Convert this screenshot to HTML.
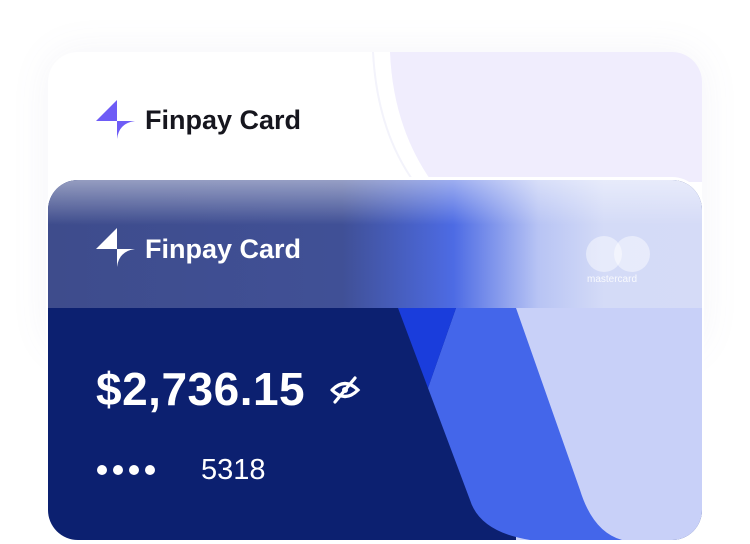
<!DOCTYPE html>
<html><head><style>
body{margin:0;width:750px;height:544px;background:#fff;overflow:hidden;position:relative;font-family:"Liberation Sans",sans-serif}
.back{position:absolute;left:48px;top:52px;width:654px;height:300px;border-radius:30px;background:#fff;overflow:hidden;box-shadow:0 0 40px rgba(120,120,160,.08)}
.front{position:absolute;left:46px;top:177px;width:658px;height:367px;border-radius:32px 32px 32px 32px;background:#fff;}
.inner{position:absolute;left:2px;top:3px;width:654px;height:360px;border-radius:30px;overflow:hidden;background:#0c2070}
.t{position:absolute;color:#fff;font-weight:bold;white-space:nowrap}
</style></head><body>
<div class="back">
<svg width="654" height="300" style="position:absolute;left:0;top:0">
<path d="M342 0 Q345 75 384 130 L654 130 L654 0 Z" fill="#f0edfd"/>
<path d="M325 0 Q329 78 366 130" stroke="#f3f3fb" stroke-width="2" fill="none"/>
<path d="M69 48 L48 69 L69 69 Z" fill="#6e5cf6"/>
<path d="M69 69 L87 69 Q71 71 69 87 Z" fill="#6e5cf6"/>
</svg>
<div class="t" style="left:97px;top:53px;font-size:27px;color:#16161e">Finpay Card</div>
</div>
<div class="front"><div class="inner">
<svg width="654" height="360" style="position:absolute;left:0;top:0">
<defs>
<linearGradient id="g" x1="0" y1="0" x2="1" y2="0"><stop offset="0" stop-color="#3e4c8c"/><stop offset=".45" stop-color="#405096"/><stop offset=".62" stop-color="#4d6be4"/><stop offset=".75" stop-color="#b8c4f4"/><stop offset=".85" stop-color="#d4dbf7"/><stop offset="1" stop-color="#d5dbf7"/></linearGradient>
<linearGradient id="v" x1="0" y1="0" x2="0" y2="1"><stop offset="0" stop-color="#fff" stop-opacity=".45"/><stop offset=".35" stop-color="#fff" stop-opacity="0"/></linearGradient></defs>
<rect x="468" y="128" width="186" height="232" fill="#c8d0f8"/>
<path d="M408 128 L468 128 L532 310 Q545 352 574 360 L482 360 Q432 352 422 320 L380 208 Z" fill="#4466ea"/>
<path d="M350 128 L408 128 L380 208 Z" fill="#1a3ddc"/>
<rect x="0" y="0" width="654" height="128" fill="url(#g)"/>
<rect x="0" y="0" width="654" height="128" fill="url(#v)"/>
<circle cx="556" cy="74" r="18" fill="#fff" opacity=".45"/>
<circle cx="584" cy="74" r="18" fill="#fff" opacity=".45"/>
<path d="M69 48 L48 69 L69 69 Z" fill="#fff"/>
<path d="M69 69 L87 69 Q71 71 69 87 Z" fill="#fff"/>
<circle cx="54" cy="290" r="5" fill="#fff"/><circle cx="70" cy="290" r="5" fill="#fff"/><circle cx="86" cy="290" r="5" fill="#fff"/><circle cx="102" cy="290" r="5" fill="#fff"/>
<g stroke="#fff" stroke-width="3.2" fill="none" stroke-linecap="round"><path d="M284 210 Q297 197 310 210 Q297 223 284 210"/><path d="M287 222 L307 198"/></g>
<circle cx="297" cy="210" r="3" fill="#fff"/>
</svg>
<div class="t" style="left:539px;top:94px;font-size:10px;font-weight:normal;opacity:.85;color:#fff">mastercard</div>
<div class="t" style="left:97px;top:54px;font-size:27px">Finpay Card</div>
<div class="t" style="left:48px;top:182px;font-size:46px;letter-spacing:0.5px">$2,736.15</div>
<div class="t" style="left:153px;top:274px;font-size:29px;font-weight:normal">5318</div>
</div></div>
</body></html>
